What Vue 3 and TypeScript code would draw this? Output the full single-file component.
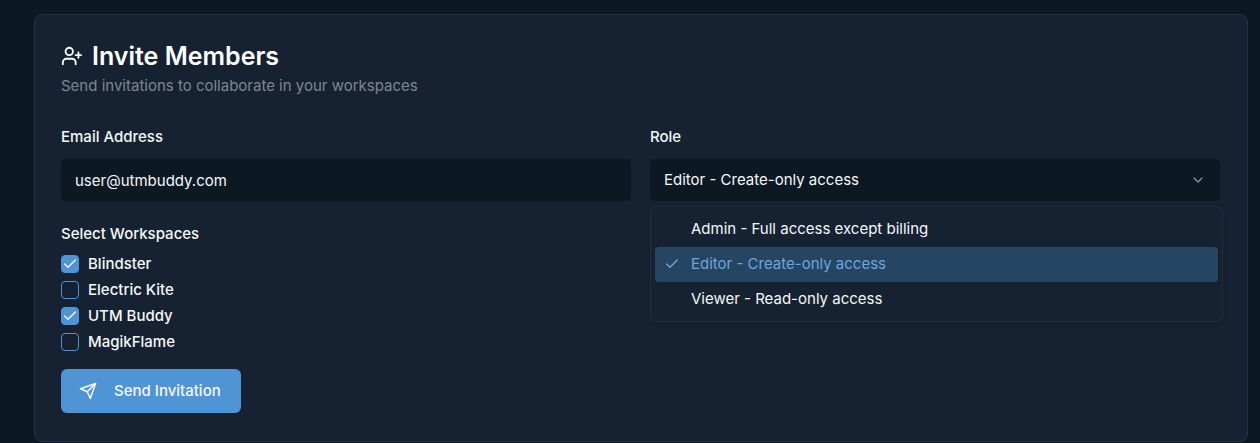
<script setup lang="ts">
import { computed, ref } from 'vue'

interface Workspace {
  id: string
  name: string
  selected: boolean
}

interface Role {
  id: string
  label: string
}

const roles: Role[] = [
  { id: 'admin', label: 'Admin - Full access except billing' },
  { id: 'editor', label: 'Editor - Create-only access' },
  { id: 'viewer', label: 'Viewer - Read-only access' },
]

const email = ref('user@utmbuddy.com')
const role = ref('editor')
const menuOpen = ref(true)
const workspaces = ref<Workspace[]>([
  { id: 'blindster', name: 'Blindster', selected: true },
  { id: 'electric-kite', name: 'Electric Kite', selected: false },
  { id: 'utm-buddy', name: 'UTM Buddy', selected: true },
  { id: 'magikflame', name: 'MagikFlame', selected: false },
])

const canSend = computed(() => email.value.includes('@') && workspaces.value.some((w) => w.selected))

function choose(id: string): void {
  role.value = id
  menuOpen.value = false
}

function send(): void {
  if (!canSend.value) return
  menuOpen.value = false
}
</script>

<template>
  <main class="page">
    <section class="card" aria-labelledby="invite-title">
      <header class="head">
        <h2 id="invite-title" class="title">
          <svg class="title-icon" viewBox="0 0 24 24" aria-hidden="true">
            <path d="M16 21v-2a4 4 0 0 0-4-4H6a4 4 0 0 0-4 4v2" />
            <circle cx="9" cy="7" r="4" />
            <path d="M19 8v6M22 11h-6" />
          </svg>
          <span>Invite Members</span>
        </h2>
        <p class="subtitle">Send invitations to collaborate in your workspaces</p>
      </header>

      <form class="form" @submit.prevent="send">
        <div class="fields">
          <div class="field">
            <label class="label" for="email">Email Address</label>
            <input id="email" v-model="email" class="control" type="email" />
          </div>

          <div class="field">
            <label class="label" for="role">Role</label>
            <div class="select">
              <select id="role" v-model="role" class="control" @mousedown.prevent="menuOpen = !menuOpen">
                <option v-for="item in roles" :key="item.id" :value="item.id">{{ item.label }}</option>
              </select>
              <svg class="chevron" viewBox="0 0 24 24" aria-hidden="true">
                <path d="m6 9 6 6 6-6" />
              </svg>
              <div v-if="menuOpen" class="menu" role="listbox" aria-label="Role">
                <button
                  v-for="item in roles"
                  :key="item.id"
                  type="button"
                  role="option"
                  class="option"
                  :class="{ active: item.id === role }"
                  :aria-selected="item.id === role"
                  @click="choose(item.id)"
                >
                  <svg class="tick" viewBox="0 0 24 24" aria-hidden="true">
                    <path v-if="item.id === role" d="M20 6 9 17l-5-5" />
                  </svg>
                  <span>{{ item.label }}</span>
                </button>
              </div>
            </div>
          </div>
        </div>

        <fieldset class="workspaces">
          <legend class="label">Select Workspaces</legend>
          <label v-for="w in workspaces" :key="w.id" class="check" :for="w.id">
            <span class="box">
              <input :id="w.id" v-model="w.selected" type="checkbox" />
              <svg v-if="w.selected" viewBox="0 0 24 24" aria-hidden="true">
                <path d="M20 6 9 17l-5-5" />
              </svg>
            </span>
            <span>{{ w.name }}</span>
          </label>
        </fieldset>

        <button class="send" type="submit">
          <svg viewBox="0 0 24 24" aria-hidden="true">
            <path d="m22 2-7 20-4-9-9-4Z" />
            <path d="M22 2 11 13" />
          </svg>
          <span>Send Invitation</span>
        </button>
      </form>
    </section>
  </main>
</template>

<style>
body {
  background: #0c1822;
}
</style>

<style scoped>
.page {
  box-sizing: border-box;
  padding: 14px 12px 2px 34px;
  font-family: Inter, 'Liberation Sans', sans-serif;
  font-size: 15px;
  line-height: 20px;
  color: #f5f7f9;
}

.card {
  padding: 26px 27px 28px 26px;
  border: 1px solid #1d3448;
  border-radius: 8px;
  background: #162231;
}

svg {
  flex: none;
  fill: none;
  stroke: currentColor;
  stroke-width: 2;
  stroke-linecap: round;
  stroke-linejoin: round;
}

.title {
  display: flex;
  align-items: center;
  gap: 9px;
  margin: 0;
  font-size: 25px;
  line-height: 30px;
  font-weight: 600;
  color: #fff;
}

.title-icon {
  width: 22px;
  height: 22px;
}

.subtitle {
  margin: 5px 0 0;
  color: #7e868f;
}

.fields {
  display: grid;
  grid-template-columns: 1fr 1fr;
  gap: 19px;
  margin-top: 31px;
}

.field {
  display: flex;
  flex-direction: column;
  gap: 12px;
}

.label {
  padding: 0;
  font-weight: 500;
}

.select {
  position: relative;
}

.control {
  box-sizing: border-box;
  display: block;
  width: 100%;
  height: 42px;
  padding: 0 14px;
  border: 0;
  border-radius: 5px;
  background: #0c1822;
  color: inherit;
  font: inherit;
  appearance: none;
}

.chevron {
  position: absolute;
  top: 13px;
  right: 14px;
  width: 16px;
  height: 16px;
  color: #8b9299;
  pointer-events: none;
}

.menu {
  position: absolute;
  top: 47px;
  left: 0;
  right: -3px;
  padding: 5px 4px 4px;
  border: 1px solid #1a3142;
  border-radius: 6px;
  background: #162231;
  box-shadow: 0 2px 4px rgb(0 0 0 / 10%);
}

.option {
  display: flex;
  align-items: center;
  gap: 11px;
  width: 100%;
  height: 35px;
  padding: 0 9px 2px;
  border: 0;
  border-radius: 4px;
  background: none;
  color: inherit;
  font: inherit;
}

.option.active {
  background: #254563;
  color: #6ea6dd;
}

.tick {
  width: 16px;
  height: 16px;
}

.workspaces {
  display: flex;
  flex-direction: column;
  gap: 6px;
  min-width: 0;
  margin: 23px 0 0;
  padding: 0;
  border: 0;
}

.workspaces .label {
  margin-bottom: 10px;
}

.check {
  display: flex;
  align-items: center;
  gap: 9px;
  align-self: flex-start;
  font-weight: 500;
}

.box {
  position: relative;
  width: 18px;
  height: 18px;
}

.box input {
  box-sizing: border-box;
  display: block;
  width: 18px;
  height: 18px;
  margin: 0;
  border: 1px solid #4f94d4;
  border-radius: 4px;
  appearance: none;
}

.box input:checked {
  background: #4f94d4;
}

.box svg {
  position: absolute;
  inset: 1px;
  width: 16px;
  height: 16px;
  pointer-events: none;
}

.send {
  display: flex;
  align-items: center;
  gap: 17px;
  height: 44px;
  margin-top: 17px;
  padding: 0 20px 0 18px;
  border: 0;
  border-radius: 6px;
  background: #4f94d4;
  color: #f5f7f9;
  font: inherit;
  font-weight: 500;
}

.send svg {
  width: 18px;
  height: 18px;
}
</style>
